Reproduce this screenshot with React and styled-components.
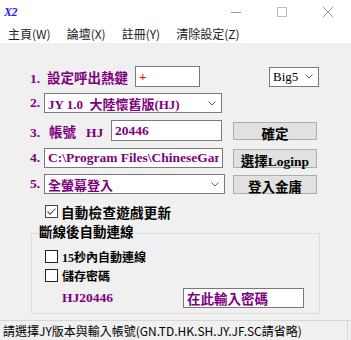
import React from "react";
import styled, { createGlobalStyle } from "styled-components";

const GlobalStyle = createGlobalStyle`
  html, body {
    margin: 0;
    padding: 0;
    background: #f0f0f0;
  }
  body {
    font-family: "Noto Sans CJK TC", sans-serif;
  }
`;

const BITMAP = `"Liberation Serif", "Noto Sans CJK TC", serif`;
const PURPLE = "#800080";

const Window = styled.div`
  width: 351px;
  height: 340px;
  display: flex;
  flex-direction: column;
  background: #f0f0f0;
  overflow: hidden;
`;

const TitleBar = styled.div`
  height: 24px;
  background: #fff;
  display: flex;
  align-items: center;
  padding-left: 4px;
`;

const AppIcon = styled.span`
  font: italic bold 12px "Liberation Serif", serif;
  color: #2020ff;
  letter-spacing: -0.5px;
`;

const Controls = styled.div`
  margin-left: auto;
  display: flex;
  height: 24px;
`;

const ControlButton = styled.div`
  width: 46px;
  height: 24px;
  display: flex;
  align-items: center;
  justify-content: center;
`;

const MenuBar = styled.div`
  height: 19px;
  background: #fff;
  display: flex;
  align-items: center;
  font-size: 12px;
  color: #222;
`;

const MenuItem = styled.span`
  padding: 0 8px;
  line-height: 19px;
`;

const Body = styled.div`
  flex: 1;
  padding: 23px 34px 0 30px;
  display: flex;
  flex-direction: column;
`;

const Row = styled.div`
  display: flex;
  align-items: center;
  height: ${(p) => p.$h}px;
  margin-top: ${(p) => p.$mt || 0}px;
  padding-left: ${(p) => p.$pl || 0}px;
`;

const Label = styled.span`
  font: bold 13.5px ${BITMAP};
  color: ${PURPLE};
  white-space: nowrap;
  width: ${(p) => (p.$w ? `${p.$w}px` : "auto")};
  flex-shrink: 0;
  margin-left: ${(p) => p.$ml || 0}px;
`;

const Num = styled.span`
  display: inline-block;
  width: ${(p) => p.$w}px;
`;

const TextBox = styled.input`
  box-sizing: border-box;
  width: ${(p) => p.$w}px;
  height: ${(p) => p.$h}px;
  border: 1px solid #7a7a7a;
  background: #fff;
  padding: 0 3px;
  font: bold 13.5px ${BITMAP};
  color: ${(p) => p.$color || PURPLE};
  outline: none;
  flex-shrink: 0;
`;

const Select = styled.div`
  box-sizing: border-box;
  width: ${(p) => p.$w}px;
  height: ${(p) => p.$h}px;
  margin-left: ${(p) => p.$ml || 0}px;
  border: 1px solid #7a7a7a;
  background: #fff;
  display: flex;
  align-items: center;
  padding: 0 5px 0 3px;
  font: ${(p) => (p.$plain ? "13px" : "bold 13px")} ${BITMAP};
  color: ${(p) => (p.$plain ? "#000" : PURPLE)};
  white-space: pre;
  flex-shrink: 0;
`;

const Chevron = styled.svg`
  margin-left: auto;
`;

const Button = styled.button`
  box-sizing: border-box;
  width: 84px;
  height: ${(p) => p.$h}px;
  margin-left: auto;
  background: #e1e1e1;
  border: 1px solid #adadad;
  padding: 0;
  font: bold 13.5px ${BITMAP};
  color: #000;
`;

const Box = styled.span`
  box-sizing: border-box;
  width: 13px;
  height: 13px;
  border: 1px solid ${(p) => (p.$checked ? "#444" : "#222")};
  background: #fff;
  display: flex;
  align-items: center;
  justify-content: center;
  flex-shrink: 0;
`;

const CheckText = styled.span`
  margin-left: ${(p) => p.$gap || 4}px;
  font: bold ${(p) => p.$size || 13.5}px ${BITMAP};
  color: #000;
  white-space: nowrap;
  letter-spacing: ${(p) => p.$ls || 0}px;
`;

const Group = styled.fieldset`
  box-sizing: border-box;
  width: 289px;
  margin: 6px 0 0 1px;
  border: 1px solid #dcdcdc;
  padding: 0 0 5px 7px;
`;

const Legend = styled.legend`
  padding: 0;
  font: bold 13.5px ${BITMAP};
  line-height: 14px;
  color: #000;
`;

const StatusBar = styled.div`
  height: 19px;
  border-top: 1px solid #d7d7d7;
  display: flex;
  align-items: stretch;
`;

const StatusText = styled.div`
  width: 344px;
  padding-left: 3px;
  border-right: 1px solid #d7d7d7;
  font-size: 12px;
  line-height: 19px;
  color: #000;
  white-space: nowrap;
  overflow: hidden;
`;

const Arrow = () => (
  <Chevron width="8" height="5" viewBox="0 0 8 5">
    <path d="M0.5 0.5 L4 4 L7.5 0.5" fill="none" stroke="#666" strokeWidth="1" />
  </Chevron>
);

const Check = ({ checked }) => (
  <Box $checked={checked}>
    {checked && (
      <svg width="11" height="11" viewBox="0 0 11 11">
        <path d="M1.5 5.5 L4.2 8.2 L9.5 2.5" fill="none" stroke="#555" strokeWidth="1.1" />
      </svg>
    )}
  </Box>
);

export default function App() {
  return (
    <Window>
      <GlobalStyle />
      <TitleBar>
        <AppIcon>X2</AppIcon>
        <Controls>
          <ControlButton>
            <svg width="10" height="10" viewBox="0 0 10 10">
              <path d="M0 5.5 H10" stroke="#999" strokeWidth="1" />
            </svg>
          </ControlButton>
          <ControlButton>
            <svg width="10" height="10" viewBox="0 0 10 10">
              <rect x="0.5" y="0.5" width="9" height="9" fill="none" stroke="#bbb" strokeWidth="1" />
            </svg>
          </ControlButton>
          <ControlButton>
            <svg width="10" height="10" viewBox="0 0 10 10">
              <path d="M0 0 L10 10 M10 0 L0 10" stroke="#999" strokeWidth="1" />
            </svg>
          </ControlButton>
        </Controls>
      </TitleBar>
      <MenuBar>
        <MenuItem>主頁(W)</MenuItem>
        <MenuItem>論壇(X)</MenuItem>
        <MenuItem>註冊(Y)</MenuItem>
        <MenuItem>清除設定(Z)</MenuItem>
      </MenuBar>

      <Body>
        <Row $h={21}>
          <Label $w={105}>
            <Num $w={17}>1.</Num>設定呼出熱鍵
          </Label>
          <TextBox $w={65} $h={21} $color="#ff0000" defaultValue="+" readOnly />
          <Select $w={50} $h={20} $ml={69} $plain>
            Big5
            <Arrow />
          </Select>
        </Row>

        <Row $h={20} $mt={6}>
          <Label $w={14}>2.</Label>
          <Select $w={178} $h={20}>
            {"JY 1.0  大陸懷舊版(HJ)"}
            <Arrow />
          </Select>
        </Row>

        <Row $h={21} $mt={7}>
          <Label $w={81}>
            <Num $w={19}>3.</Num>帳號
            <Num $w={10} />HJ
          </Label>
          <TextBox $w={111} $h={21} defaultValue="20446" readOnly />
          <Button $h={18}>確定</Button>
        </Row>

        <Row $h={20} $mt={7}>
          <Label $w={14}>4.</Label>
          <TextBox $w={179} $h={20} defaultValue="C:\Program Files\ChineseGame" readOnly />
          <Button $h={19}>選擇Loginp</Button>
        </Row>

        <Row $h={20} $mt={6}>
          <Label $w={14}>5.</Label>
          <Select $w={181} $h={20}>
            全螢幕登入
            <Arrow />
          </Select>
          <Button $h={19}>登入金庸</Button>
        </Row>

        <Row $h={17} $mt={9} $pl={15}>
          <Check checked />
          <CheckText $gap={3} $ls={0.3}>自動檢查遊戲更新</CheckText>
        </Row>

        <Group>
          <Legend>斷線後自動連線</Legend>
          <Row $h={15} $mt={9} $pl={6}>
            <Check />
            <CheckText $size={12}>15秒內自動連線</CheckText>
          </Row>
          <Row $h={15} $mt={4} $pl={6}>
            <Check />
            <CheckText $size={12}>儲存密碼</CheckText>
          </Row>
          <Row $h={20} $mt={5} $pl={6}>
            <Label $w={121} $ml={17}>HJ20446</Label>
            <TextBox $w={121} $h={20} defaultValue="在此輸入密碼" readOnly />
          </Row>
        </Group>
      </Body>

      <StatusBar>
        <StatusText>請選擇JY版本與輸入帳號(GN.TD.HK.SH.JY.JF.SC請省略)</StatusText>
      </StatusBar>
    </Window>
  );
}
